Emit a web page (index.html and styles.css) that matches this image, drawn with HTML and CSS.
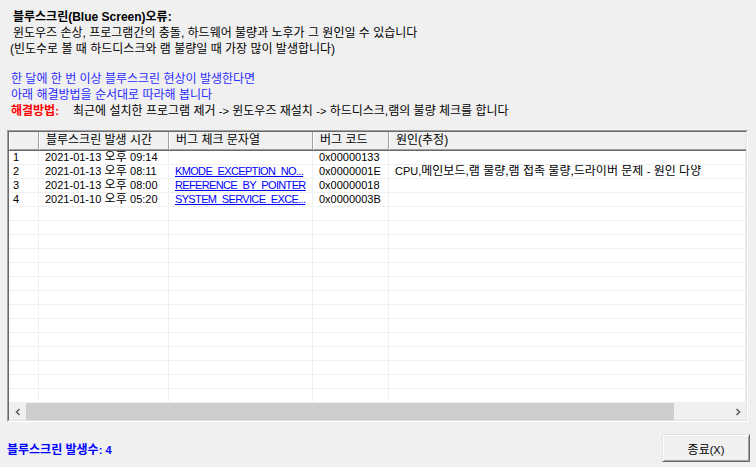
FILE: index.html
```html
<!DOCTYPE html>
<html lang="ko">
<head>
<meta charset="utf-8">
<title>블루스크린</title>
<link rel="stylesheet" href="styles.css">
</head>
<body>
<div class="info">
  <div class="line l-title">블루스크린(Blue Screen)오류:</div>
  <div class="line l-indent">윈도우즈 손상, 프로그램간의 충돌, 하드웨어 불량과 노후가 그 원인일 수 있습니다</div>
  <div class="line l-paren">(빈도수로 볼 때 하드디스크와 램 불량일 때 가장 많이 발생합니다)</div>
  <div class="line l-blue l-gap">한 달에 한 번 이상 블루스크린 현상이 발생한다면</div>
  <div class="line l-blue">아래 해결방법을 순서대로 따라해 봅니다</div>
  <div class="line l-fix"><span class="fix-label">해결방법<span class="en">:</span></span><span>최근에 설치한 프로그램 제거 <span class="en">-&gt;</span> 윈도우즈 재설치 <span class="en">-&gt;</span> 하드디스크,램의 불량 체크를 합니다</span></div>
</div>

<div class="list">
  <div class="list-inner">
    <div class="head">
      <div class="hc"></div>
      <div class="hc">블루스크린 발생 시간</div>
      <div class="hc">버그 체크 문자열</div>
      <div class="hc">버그 코드</div>
      <div class="hc hc-last">원인(추정)</div>
    </div>
    <div class="rows">
      <div class="c c-num"><span class="en">1</span></div><div class="c"><span class="en">2021-01-13</span> 오후 <span class="en">09:14</span></div><div class="c"></div><div class="c"><span class="en">0x00000133</span></div><div class="c"></div>
      <div class="c c-num"><span class="en">2</span></div><div class="c"><span class="en">2021-01-13</span> 오후 <span class="en">08:11</span></div><div class="c"><span class="en lnk">KMODE_EXCEPTION_NO...</span></div><div class="c"><span class="en">0x0000001E</span></div><div class="c"><span class="en">CPU,</span>메인보드,램 불량,램 접촉 불량,드라이버 문제 <span class="en">-</span> 원인 다양</div>
      <div class="c c-num"><span class="en">3</span></div><div class="c"><span class="en">2021-01-13</span> 오후 <span class="en">08:00</span></div><div class="c"><span class="en lnk">REFERENCE_BY_POINTER</span></div><div class="c"><span class="en">0x00000018</span></div><div class="c"></div>
      <div class="c c-num"><span class="en">4</span></div><div class="c"><span class="en">2021-01-10</span> 오후 <span class="en">05:20</span></div><div class="c"><span class="en lnk">SYSTEM_SERVICE_EXCE...</span></div><div class="c"><span class="en">0x0000003B</span></div><div class="c"></div>
      <div class="c"></div><div class="c"></div><div class="c"></div><div class="c"></div><div class="c"></div>
      <div class="c"></div><div class="c"></div><div class="c"></div><div class="c"></div><div class="c"></div>
      <div class="c"></div><div class="c"></div><div class="c"></div><div class="c"></div><div class="c"></div>
      <div class="c"></div><div class="c"></div><div class="c"></div><div class="c"></div><div class="c"></div>
      <div class="c"></div><div class="c"></div><div class="c"></div><div class="c"></div><div class="c"></div>
      <div class="c"></div><div class="c"></div><div class="c"></div><div class="c"></div><div class="c"></div>
      <div class="c"></div><div class="c"></div><div class="c"></div><div class="c"></div><div class="c"></div>
      <div class="c"></div><div class="c"></div><div class="c"></div><div class="c"></div><div class="c"></div>
      <div class="c"></div><div class="c"></div><div class="c"></div><div class="c"></div><div class="c"></div>
      <div class="c"></div><div class="c"></div><div class="c"></div><div class="c"></div><div class="c"></div>
      <div class="c"></div><div class="c"></div><div class="c"></div><div class="c"></div><div class="c"></div>
      <div class="c"></div><div class="c"></div><div class="c"></div><div class="c"></div><div class="c"></div>
      <div class="c"></div><div class="c"></div><div class="c"></div><div class="c"></div><div class="c"></div>
      <div class="c"></div><div class="c"></div><div class="c"></div><div class="c"></div><div class="c"></div>
    </div>
    <div class="hscroll">
      <div class="sb-btn"><svg width="8" height="8" viewBox="0 0 8 8"><path d="M5.5 1 L2.5 4 L5.5 7" fill="none" stroke="#606060" stroke-width="1.6"/></svg></div>
      <div class="sb-thumb"></div>
      <div class="sb-track"></div>
      <div class="sb-btn"><svg width="8" height="8" viewBox="0 0 8 8"><path d="M2.5 1 L5.5 4 L2.5 7" fill="none" stroke="#606060" stroke-width="1.6"/></svg></div>
    </div>
  </div>
</div>

<div class="footer">
  <div class="count">블루스크린 발생수<span class="en">: 4</span></div>
  <button class="btn" type="button">종료<span class="en">(X)</span></button>
</div>
</body>
</html>
```

FILE: styles.css
```css
html, body {
  margin: 0;
  padding: 0;
}
body {
  width: 756px;
  height: 467px;
  overflow: hidden;
  background: #f0f0f0;
  color: #000;
  font-family: "Liberation Sans", "Noto Sans CJK KR", sans-serif;
  font-size: 12px;
}
.en {
  font-size: 11px;
}

.info {
  padding: 9px 0 0 11px;
}
.line {
  height: 16px;
  line-height: 16px;
  white-space: nowrap;
}
.l-title {
  margin-left: 2px;
  font-weight: bold;
}
.l-indent {
  margin-left: 2px;
}
.l-paren {
  margin-left: -1px;
}
.l-gap {
  margin-top: 14px;
}
.l-blue {
  color: #2a2aff;
}
.l-fix {
  display: flex;
}
.fix-label {
  color: #ff0000;
  font-weight: bold;
  width: 62px;
}

.list {
  margin: 11px 0 0 7px;
  width: 741px;
  box-sizing: border-box;
  border-top: 1px solid #a0a0a0;
  border-left: 1px solid #a0a0a0;
  border-right: 1px solid #ffffff;
  border-bottom: 1px solid #ffffff;
}
.list-inner {
  border-top: 1px solid #696969;
  border-left: 1px solid #696969;
  border-right: 1px solid #e3e3e3;
  border-bottom: 1px solid #e3e3e3;
  background: #ffffff;
  overflow: hidden;
}

.head {
  display: grid;
  grid-template-columns: 30px 130px 144px 76px 1fr;
  height: 19px;
  box-sizing: border-box;
  border-bottom: 1px solid #696969;
  background: #f0f0f0;
}
.hc {
  box-sizing: border-box;
  border-left: 1px solid #ffffff;
  border-right: 1px solid #a0a0a0;
  border-bottom: 1px solid #a0a0a0;
  padding-left: 6px;
  font-size: 12px;
  line-height: 17px;
  white-space: nowrap;
  overflow: hidden;
}
.hc-last {
  border-right: none;
}

.rows {
  display: grid;
  grid-template-columns: 30px 130px 144px 76px 1fr;
  grid-auto-rows: 14px;
}
.c {
  box-sizing: border-box;
  border-right: 1px solid #f0f0f0;
  border-bottom: 1px solid #f0f0f0;
  padding-left: 6px;
  line-height: 13px;
  white-space: nowrap;
  overflow: hidden;
}
.c-num {
  padding-left: 4px;
}
.lnk {
  color: #0000ff;
  text-decoration: underline;
  letter-spacing: -0.65px;
}

.hscroll {
  display: flex;
  height: 17px;
  background: #f0f0f0;
}
.sb-btn {
  width: 17px;
  display: flex;
  align-items: center;
  justify-content: center;
}
.sb-thumb {
  width: 648px;
  background: #cdcdcd;
}
.sb-track {
  flex: 1;
}

.footer {
  display: flex;
  align-items: center;
  justify-content: space-between;
  margin-top: 12px;
  padding: 0 6px 0 7px;
  height: 28px;
}
.count {
  color: #0000ff;
  font-weight: bold;
}
.btn {
  width: 88px;
  height: 28px;
  margin: 0;
  padding: 0;
  background: #f0f0f0;
  font-family: "Liberation Sans", "Noto Sans CJK KR", sans-serif;
  font-size: 12px;
  color: #000;
  border-top: 1px solid #e3e3e3;
  border-left: 1px solid #e3e3e3;
  border-right: 1px solid #696969;
  border-bottom: 1px solid #696969;
  box-shadow: inset 1px 1px 0 #ffffff, inset -1px -1px 0 #a0a0a0;
}
```
